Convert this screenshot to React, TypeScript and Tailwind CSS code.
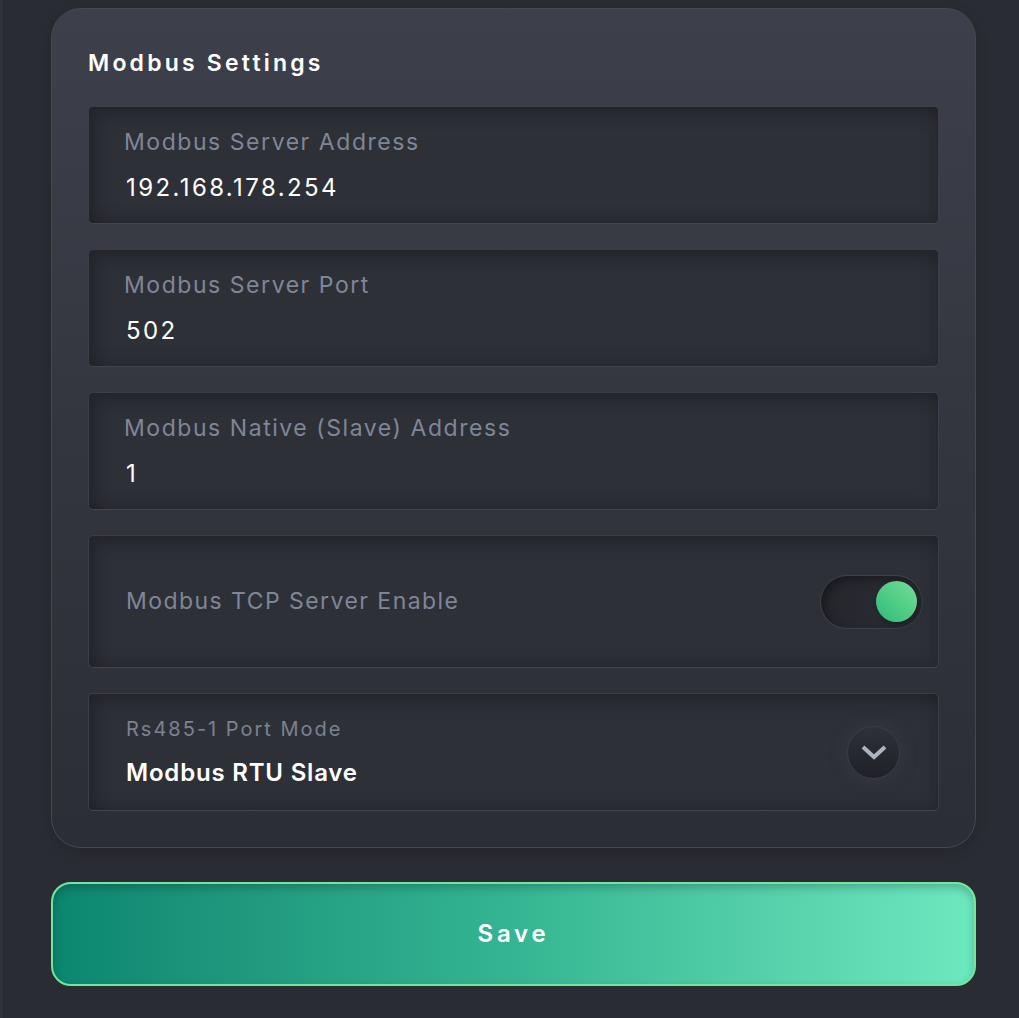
const fieldBox =
    'rounded-[5px] border border-[#3b3e48] border-b-[#42454f] bg-[#2e3038] shadow-[inset_8px_8px_16px_rgba(0,0,0,0.22),inset_-6px_-6px_14px_rgba(0,0,0,0.12)]';

const TextField = ({ label, value }: { label: string; value: string }) => (
    <div className={`${fieldBox} h-[118px] flex flex-col pl-[35px] pt-[20px]`}>
        <span className="text-[23px] leading-[30px] text-[#7f8697] tracking-[1.55px]">{label}</span>
        <span className="mt-[16px] pl-[2px] text-[24px] leading-[30px] text-white tracking-[2.4px]">{value}</span>
    </div>
);

export default function App() {
    return (
        <div className="w-full min-h-[1018px] bg-[#2a2c33] font-['Inter',sans-serif] border-l-[3px] border-[#30323a]">
            <div className="pl-[48px] pr-[43px] pt-[8px] pb-[32px]">

                {/* Settings card */}
                <div className="rounded-[30px] border border-[#454853] bg-gradient-to-b from-[#3d404b] via-[#34363f] to-[#2c2e35] px-[36px] pt-[38px] pb-[36px] shadow-[0_4px_14px_rgba(0,0,0,0.15)]">
                    <h2 className="text-[23px] leading-[32px] font-semibold text-white tracking-[3.2px] mb-[27px]">
                        Modbus Settings
                    </h2>

                    <div className="flex flex-col gap-[25px]">
                        <TextField label="Modbus Server Address" value="192.168.178.254" />
                        <TextField label="Modbus Server Port" value="502" />
                        <TextField label="Modbus Native (Slave) Address" value="1" />

                        {/* Toggle row */}
                        <div className={`${fieldBox} h-[133px] flex items-center justify-between pl-[37px] pr-[15px]`}>
                            <span className="text-[23px] text-[#7f8697] tracking-[1.45px]">Modbus TCP Server Enable</span>
                            <div className="w-[103px] h-[54px] rounded-full border border-[#3e414b] bg-gradient-to-r from-[#24262c] to-[#2c2e35] shadow-[inset_4px_4px_10px_rgba(0,0,0,0.35)] flex items-center justify-end pr-[5px]">
                                <div className="w-[41px] h-[41px] rounded-full bg-gradient-to-tr from-[#28bb78] to-[#72df95] shadow-[2px_3px_6px_rgba(0,0,0,0.35)]" />
                            </div>
                        </div>

                        {/* Select row */}
                        <div className={`${fieldBox} h-[118px] flex items-center justify-between pl-[37px] pr-[38px]`}>
                            <div className="flex flex-col">
                                <span className="text-[20px] leading-[26px] text-[#7b8292] tracking-[2px]">Rs485-1 Port Mode</span>
                                <span className="mt-[16px] text-[24px] leading-[30px] font-semibold text-white tracking-[0.8px]">Modbus RTU Slave</span>
                            </div>
                            <div className="w-[53px] h-[53px] rounded-full border border-[#3a3d47] bg-gradient-to-b from-[#2e3139] to-[#1f2127] shadow-[0_0_18px_rgba(70,74,86,0.35)] flex items-center justify-center">
                                <svg width="28" height="18" viewBox="0 0 28 18" className="mt-[2px]">
                                    <polyline points="3,3 14,13 25,3" fill="none" stroke="#aeb3c0" strokeWidth="4" strokeLinejoin="miter" />
                                </svg>
                            </div>
                        </div>
                    </div>
                </div>

                {/* Save button */}
                <button className="mt-[34px] w-full h-[104px] rounded-[20px] border-2 border-[#74e59c] bg-gradient-to-r from-[#0a8670] via-[#35b592] to-[#6ce9bf] shadow-[inset_0_4px_8px_rgba(0,0,0,0.22)] text-white text-[24px] font-semibold tracking-[3.8px]">
                    Save
                </button>
            </div>
        </div>
    );
}
